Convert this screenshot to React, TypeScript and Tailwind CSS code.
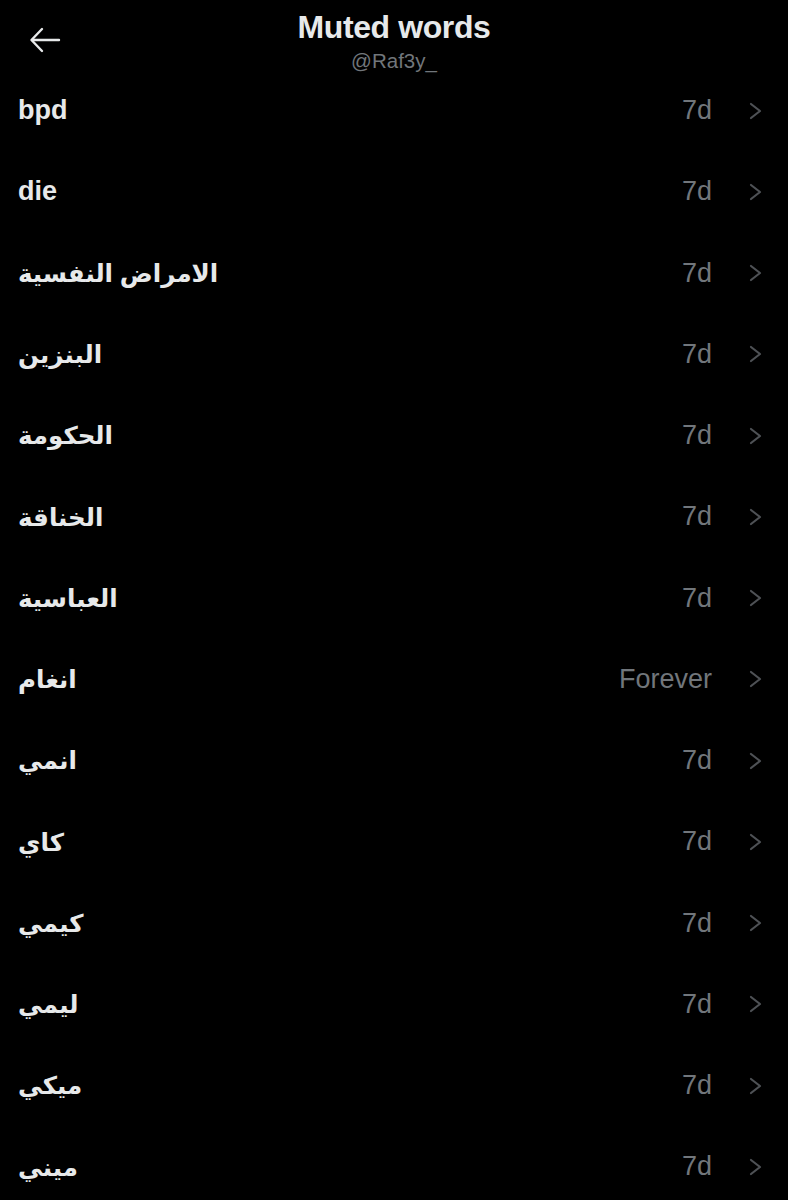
const words: [string, string][] = [
  ['bpd', '7d'],
  ['die', '7d'],
  ['الامراض النفسية', '7d'],
  ['البنزين', '7d'],
  ['الحكومة', '7d'],
  ['الخناقة', '7d'],
  ['العباسية', '7d'],
  ['انغام', 'Forever'],
  ['انمي', '7d'],
  ['كاي', '7d'],
  ['كيمي', '7d'],
  ['ليمي', '7d'],
  ['ميكي', '7d'],
  ['ميني', '7d'],
]

const isArabic = (s: string) => /[\u0600-\u06FF]/.test(s)

function BackArrow() {
  return (
    <svg width="32" height="26" viewBox="0 0 32 26" fill="none" stroke="#e7e9ea" strokeWidth="2.4" strokeLinecap="round" strokeLinejoin="round">
      <path d="M30 13H3" />
      <path d="M13 2L2.5 13L13 24" />
    </svg>
  )
}

function Chevron() {
  return (
    <svg width="14" height="18" viewBox="0 0 14 18" fill="none" stroke="#4e5155" strokeWidth="2.2" strokeLinecap="round" strokeLinejoin="round">
      <path d="M2 2L11 9L2 16" />
    </svg>
  )
}

export default function App() {
  return (
    <div
      className="min-h-[1200px] w-[788px] bg-black text-[#e7e9ea] overflow-hidden"
      style={{ fontFamily: '"Liberation Sans", "DejaVu Sans", sans-serif' }}
    >
      <div className="grid grid-cols-[88px_1fr_88px] h-[70px]">
        <div className="flex items-start pl-[29px] pt-[27px]">
          <BackArrow />
        </div>
        <div className="flex flex-col items-center pt-[8px]">
          <div className="text-[32px] leading-[38px] font-bold tracking-[-0.4px]">Muted words</div>
          <div className="text-[20.5px] leading-[24px] mt-[3px] text-[#71767b]">@Raf3y_</div>
        </div>
        <div />
      </div>
      <div className="flex flex-col">
        {words.map(([w, d]) => (
          <div key={w} className="h-[81.25px] flex items-center justify-between pl-[18px] pr-[25px]">
            <span className={isArabic(w) ? 'text-[24.5px] font-bold leading-none pt-[2px]' : 'text-[27px] font-bold leading-none'}>
              {w}
            </span>
            <div className="flex items-center gap-[37px]">
              <span className="text-[27px] leading-none text-[#71767b]">{d}</span>
              <Chevron />
            </div>
          </div>
        ))}
      </div>
    </div>
  )
}
